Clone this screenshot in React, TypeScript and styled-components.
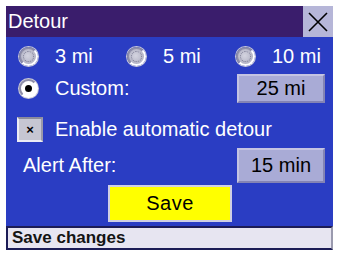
import styled, { createGlobalStyle } from "styled-components";

const GlobalStyle = createGlobalStyle`
  html, body {
    margin: 0;
    padding: 0;
    background: #ffffff;
  }
  body {
    font-family: "Liberation Sans", Arial, sans-serif;
  }
`;

const Screen = styled.div`
  width: 340px;
  height: 254px;
  padding: 6px 7px 4px 6px;
  box-sizing: border-box;
`;

const Panel = styled.div`
  display: flex;
  flex-direction: column;
  height: 100%;
`;

const TitleBar = styled.div`
  height: 31px;
  display: flex;
  align-items: center;
  background: #3a1d6c;
`;

const Title = styled.div`
  flex: 1;
  padding-left: 2px;
  color: #ffffff;
  font-size: 20px;
  line-height: 31px;
`;

const CloseButton = styled.div`
  width: 30px;
  height: 31px;
  display: flex;
  align-items: center;
  justify-content: center;
  background: #b6b6d8;
`;

const Body = styled.div`
  flex: 1;
  display: flex;
  flex-direction: column;
  padding: 8px 8px 0 14px;
  background: #2a3dc3;
  color: #ffffff;
  font-size: 20px;
`;

const Row = styled.div<{ $h: number; $top?: number }>`
  height: ${p => p.$h}px;
  margin-top: ${p => p.$top ?? 0}px;
  display: flex;
  align-items: center;
`;

const Choices = styled.div`
  display: grid;
  grid-template-columns: 108px 109px 1fr;
  height: 22px;
  align-items: center;
`;

const Choice = styled.div`
  display: flex;
  align-items: center;
`;

const Mark = styled.div`
  width: 35px;
  flex: none;
  display: flex;
  align-items: center;
`;

const Radio = styled.div<{ $on?: boolean }>`
  width: 19px;
  height: 19px;
  margin-left: -1px;
  box-sizing: border-box;
  border-radius: 50%;
  border: 2px solid;
  border-color: #8e8ea8 #ffffff #ffffff #8e8ea8;
  background: ${p =>
    p.$on ? "#ffffff" : "radial-gradient(circle at 45% 45%, #d4d4e0, #a6a6ba)"};
  box-shadow: 0 0 0 1px #c8c8d8;
  display: flex;
  align-items: center;
  justify-content: center;

  &::after {
    content: "";
    box-sizing: border-box;
    width: ${p => (p.$on ? 7 : 11)}px;
    height: ${p => (p.$on ? 7 : 11)}px;
    border-radius: 50%;
    background: ${p => (p.$on ? "#000000" : "transparent")};
    border: ${p => (p.$on ? "none" : "1px dotted #7c7c94")};
  }
`;

const Label = styled.span<{ $indent?: number }>`
  white-space: nowrap;
  padding-left: ${p => p.$indent ?? 0}px;
`;

const CheckBox = styled.div`
  width: 26px;
  height: 25px;
  margin-left: -3px;
  box-sizing: border-box;
  border: 2px solid;
  border-color: #8c8c9c #9a9aaa #ececf4 #ececf4;
  background: #c6c6d2;
  color: #000000;
  font-size: 13px;
  font-weight: bold;
  display: flex;
  align-items: center;
  justify-content: center;
`;

const Spacer = styled.div`
  flex: 1;
`;

const ValueButton = styled.div<{ $h: number }>`
  width: 88px;
  height: ${p => p.$h}px;
  box-sizing: border-box;
  border: 2px solid;
  border-color: #c4c4e2 #8484b4 #8484b4 #c4c4e2;
  background: #a9abd6;
  color: #000000;
  display: flex;
  align-items: center;
  justify-content: center;
`;

const SaveRow = styled.div`
  margin-top: 2px;
  height: 37px;
  display: flex;
  padding-left: 88px;
`;

const SaveButton = styled.div`
  width: 124px;
  height: 37px;
  box-sizing: border-box;
  border: 2px solid #cfcfe4;
  background: #ffff00;
  color: #000000;
  letter-spacing: 0.5px;
  display: flex;
  align-items: center;
  justify-content: center;
`;

const StatusBar = styled.div`
  height: 24px;
  box-sizing: border-box;
  border: 2px solid;
  border-color: #1c1c56 #9a9aae #1c1c56 #1c1c56;
  background: #e7e5f1;
  color: #141414;
  font-size: 17px;
  font-weight: bold;
  padding-left: 4px;
  display: flex;
  align-items: center;
`;

const App = () => {
  return (
    <>
      <GlobalStyle />
      <Screen>
        <Panel>
          <TitleBar>
            <Title>Detour</Title>
            <CloseButton>
              <svg width="22" height="22" viewBox="0 0 22 22">
                <path d="M2 2 L20 20 M20 2 L2 20" stroke="#000" strokeWidth="1.6" fill="none" />
              </svg>
            </CloseButton>
          </TitleBar>
          <Body>
            <Choices>
              <Choice>
                <Mark><Radio /></Mark>
                <Label>3 mi</Label>
              </Choice>
              <Choice>
                <Mark><Radio /></Mark>
                <Label>5 mi</Label>
              </Choice>
              <Choice>
                <Mark><Radio /></Mark>
                <Label>10 mi</Label>
              </Choice>
            </Choices>
            <Row $h={29} $top={7}>
              <Mark><Radio $on /></Mark>
              <Label>Custom:</Label>
              <Spacer />
              <ValueButton $h={29}>25 mi</ValueButton>
            </Row>
            <Row $h={26} $top={13}>
              <Mark><CheckBox>×</CheckBox></Mark>
              <Label>Enable automatic detour</Label>
            </Row>
            <Row $h={35} $top={6}>
              <Label $indent={3}>Alert After:</Label>
              <Spacer />
              <ValueButton $h={35}>15 min</ValueButton>
            </Row>
            <SaveRow>
              <SaveButton>Save</SaveButton>
            </SaveRow>
          </Body>
          <StatusBar>Save changes</StatusBar>
        </Panel>
      </Screen>
    </>
  );
};

export default App;
